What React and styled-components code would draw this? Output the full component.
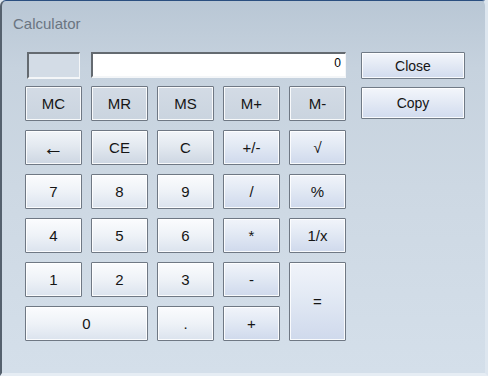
import styled, { createGlobalStyle, css } from "styled-components"

const GlobalStyle = createGlobalStyle`
    html, body {
        margin: 0;
        padding: 0;
        background: #dfe7ef;
    }
    * {
        box-sizing: border-box;
    }
`

const memoryKeys = ["MC", "MR", "MS", "M+", "M-"]

const App = () => {
    return (
        <>
            <GlobalStyle />
            <Window>
                <TitleBar>Calculator</TitleBar>
                <Body>
                    <Keypad>
                        <MemoryIndicator />
                        <Display>0</Display>
                        {memoryKeys.map((k) => (
                            <Key key={k} $kind="memory">{k}</Key>
                        ))}
                        <Key $kind="func" $size="21px">←</Key>
                        <Key $kind="func">CE</Key>
                        <Key $kind="func">C</Key>
                        <Key $kind="op">+/-</Key>
                        <Key $kind="op">√</Key>
                        <Key>7</Key>
                        <Key>8</Key>
                        <Key>9</Key>
                        <Key $kind="op">/</Key>
                        <Key $kind="op">%</Key>
                        <Key>4</Key>
                        <Key>5</Key>
                        <Key>6</Key>
                        <Key $kind="op">*</Key>
                        <Key $kind="op">1/x</Key>
                        <Key>1</Key>
                        <Key>2</Key>
                        <Key>3</Key>
                        <Key $kind="op">-</Key>
                        <Key $kind="op" $area="6 / 5 / 8 / 6">=</Key>
                        <Key $area="7 / 1 / 8 / 3">0</Key>
                        <Key>.</Key>
                        <Key $kind="op">+</Key>
                    </Keypad>
                    <Side>
                        <SideButton>Close</SideButton>
                        <SideButton $tall>Copy</SideButton>
                    </Side>
                </Body>
            </Window>
        </>
    )
}

const Window = styled.div`
    width: 488px;
    height: 376px;
    border-top: 1px solid #2b4f80;
    border-left: 2px solid #55616e;
    border-right: 3px solid #dde6ef;
    border-bottom: 3px solid #e6edf4;
    border-radius: 6px 6px 0 0;
    background: linear-gradient(180deg, #b9c7d5 0%, #c6d2de 18%, #cdd8e3 50%, #d4dfea 100%);
    font-family: "Liberation Sans", Arial, sans-serif;
    overflow: hidden;
`

const TitleBar = styled.div`
    height: 51px;
    padding: 14px 0 0 11px;
    font-size: 15px;
    line-height: 18px;
    color: #6a7581;
`

const Body = styled.div`
    display: flex;
    align-items: flex-start;
    padding-left: 23px;
`

const Keypad = styled.div`
    display: grid;
    grid-template-columns: repeat(5, 57px);
    grid-template-rows: 25px repeat(6, 35px);
    column-gap: 9px;
    row-gap: 9px;
`

const sunken = css`
    border-top: 2px solid #646a70;
    border-left: 2px solid #646a70;
    border-right: 1px solid #f4f6f8;
    border-bottom: 2px solid #f4f6f8;
`

const MemoryIndicator = styled.div`
    ${sunken};
    height: 27px;
    margin: 0 2px;
    background: #d3dce6;
`

const Display = styled.div`
    ${sunken};
    grid-column: 2 / 6;
    height: 26px;
    background: #fff;
    text-align: right;
    padding: 3px 4px 0 0;
    font-family: "Liberation Sans Narrow", "Liberation Sans", Arial, sans-serif;
    font-size: 12px;
    line-height: 12px;
    color: #000;
`

const fills = {
    memory: "linear-gradient(180deg, #d3dbe5 0%, #cad4df 100%)",
    func: "linear-gradient(180deg, #f2f5f9 0%, #e3e9f0 45%, #cdd6e2 100%)",
    op: "linear-gradient(180deg, #f1f4fa 0%, #e2e9f4 45%, #cfd9ec 100%)",
    digit: "linear-gradient(180deg, #fbfcfe 0%, #eef2f7 50%, #dbe3ee 100%)",
}

const Key = styled.button`
    grid-area: ${(p) => p.$area || "auto"};
    margin: 0;
    padding: 0;
    border: 1px solid #6f7884;
    border-radius: 1px;
    box-shadow: inset 0 0 0 1px rgba(255, 255, 255, 0.85);
    background: ${(p) => fills[p.$kind || "digit"]};
    font-family: "Liberation Sans", Arial, sans-serif;
    font-size: ${(p) => p.$size || "15px"};
    color: #151515;
    display: flex;
    align-items: center;
    justify-content: center;
    cursor: pointer;
`

const Side = styled.div`
    display: flex;
    flex-direction: column;
    gap: 8px;
    margin-left: 15px;
`

const SideButton = styled.button`
    width: 104px;
    height: ${(p) => (p.$tall ? "32px" : "27px")};
    margin: 0;
    padding: 0;
    border: 1px solid #707a86;
    border-radius: 1px;
    box-shadow: inset 0 0 0 1px rgba(255, 255, 255, 0.85);
    background: linear-gradient(180deg, #f3f6fb 0%, #e4eaf5 45%, #d1dbee 100%);
    font-family: "Liberation Sans", Arial, sans-serif;
    font-size: 14px;
    color: #151515;
    cursor: pointer;
`

export default App
